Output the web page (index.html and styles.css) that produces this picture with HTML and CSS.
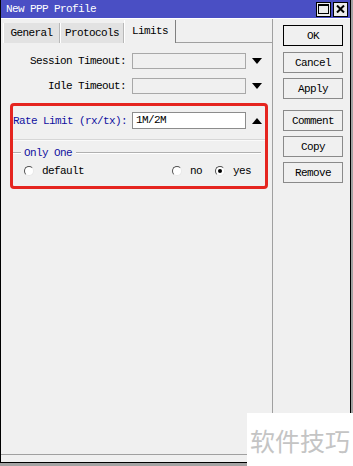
FILE: index.html
```html
<!DOCTYPE html>
<html>
<head>
<meta charset="utf-8">
<link rel="stylesheet" href="styles.css">
</head>
<body>
<div class="window">
  <div class="titlebar">
    <span class="title">New PPP Profile</span>
    <div class="tb-btns">
      <span class="tb-btn"><svg width="11" height="10" viewBox="0 0 11 10"><rect x="0.5" y="0.5" width="10" height="9" fill="none" stroke="#000"/><rect x="0" y="0" width="11" height="2" fill="#000"/></svg></span>
      <span class="tb-btn"><svg width="9" height="8" viewBox="0 0 9 8"><path d="M1 0.5 L8 7.5 M8 0.5 L1 7.5" stroke="#000" stroke-width="2"/></svg></span>
    </div>
  </div>
  <div class="main">
    <div class="left">
      <div class="tabs">
        <div class="tab t-general">General</div>
        <div class="tab t-protocols">Protocols</div>
        <div class="tab active t-limits">Limits</div>
        <div class="tab-fill"></div>
      </div>
      <div class="pane">
        <div class="row">
          <span class="label">Session Timeout:</span>
          <span class="input disabled"></span>
          <svg class="arrow" width="10" height="6" viewBox="0 0 10 6"><path d="M0 0 H10 L5 6 Z" fill="#000"/></svg>
        </div>
        <div class="row">
          <span class="label">Idle Timeout:</span>
          <span class="input disabled"></span>
          <svg class="arrow" width="10" height="6" viewBox="0 0 10 6"><path d="M0 0 H10 L5 6 Z" fill="#000"/></svg>
        </div>
        <div class="highlight">
          <div class="row rate">
            <span class="label blue">Rate Limit (rx/tx):</span>
            <span class="input">1M/2M</span>
            <svg class="arrow" width="10" height="6" viewBox="0 0 10 6"><path d="M0 6 H10 L5 0 Z" fill="#000"/></svg>
          </div>
          <div class="sep"></div>
          <div class="group-head">
            <span class="gline short"></span>
            <span class="legend">Only One</span>
            <span class="gline long"></span>
          </div>
          <div class="radios">
            <span class="radio-item"><span class="radio"></span>default</span>
            <span class="radio-item push"><span class="radio"></span>no</span>
            <span class="radio-item"><span class="radio checked"></span>yes</span>
          </div>
        </div>
      </div>
    </div>
    <div class="buttons">
      <div class="btn default">OK</div>
      <div class="btn">Cancel</div>
      <div class="btn">Apply</div>
      <div class="btn spaced">Comment</div>
      <div class="btn">Copy</div>
      <div class="btn">Remove</div>
    </div>
  </div>
  <div class="status"></div>
</div>
<div class="watermark">软件技巧</div>
</body>
</html>
```

FILE: styles.css
```css
html, body {
  margin: 0;
  padding: 0;
}
body {
  width: 353px;
  height: 466px;
  background: #a3a3a3;
  position: relative;
  overflow: hidden;
  font-family: "Liberation Mono", "DejaVu Sans Mono", monospace;
  font-size: 11px;
  letter-spacing: -0.6px;
  color: #000;
}
.window {
  width: 351px;
  height: 463px;
  box-sizing: border-box;
  border: 1px solid #000;
  border-top: none;
  background: #f0f0f0;
  display: flex;
  flex-direction: column;
}
.titlebar {
  height: 19px;
  flex: none;
  background: #4a4fc4;
  border-bottom: 1px solid #fff;
  box-sizing: border-box;
  display: flex;
  align-items: center;
  padding-left: 5px;
  padding-right: 2px;
}
.title {
  color: #fff;
  flex: 1;
}
.tb-btns {
  display: flex;
  gap: 2px;
}
.tb-btn {
  width: 15px;
  height: 15px;
  box-sizing: border-box;
  background: #ececec;
  border: 1px solid #000;
  display: flex;
  align-items: center;
  justify-content: center;
}
.main {
  flex: 1;
  display: flex;
}
.left {
  width: 272px;
  box-sizing: border-box;
  border-right: 1px solid #a0a0a0;
  display: flex;
  flex-direction: column;
}
.tabs {
  display: flex;
  height: 24px;
  padding-left: 2px;
  box-sizing: border-box;
  padding-top: 1px;
}
.tab {
  height: 20px;
  margin-top: 3px;
  box-sizing: border-box;
  background: #e2e2e2;
  border-left: 1px solid #fff;
  border-right: 1px solid #b8b8b8;
  display: flex;
  align-items: center;
  justify-content: center;
}
.t-general { width: 57px; }
.t-protocols { width: 64px; }
.t-limits { width: 52px; }
.tab.active {
  height: 23px;
  margin-top: 0;
  background: #f0f0f0;
  border-right: 1px solid #808080;
  padding-bottom: 2px;
}
.tab-fill {
  flex: 1;
  border-bottom: 1px solid #a0a0a0;
}
.pane {
  flex: 1;
  padding-top: 10px;
}
.row {
  display: grid;
  grid-template-columns: 125px 114px 10px;
  column-gap: 6px;
  align-items: center;
  height: 16px;
  margin-bottom: 9px;
}
.row .label {
  text-align: right;
  white-space: nowrap;
}
.input {
  height: 16px;
  box-sizing: border-box;
  border: 1px solid #a8a8a8;
  background: #fff;
  padding-left: 3px;
  line-height: 14px;
}
.input.disabled {
  background: #f0f0f0;
}
.arrow {
  justify-self: center;
}
.highlight {
  width: 258px;
  box-sizing: border-box;
  margin-left: 9px;
  margin-top: 1px;
  border: 3px solid #e5251f;
  border-radius: 4px;
  padding-top: 6px;
  padding-bottom: 9px;
}
.row.rate {
  grid-template-columns: 113px 114px 10px;
  height: 17px;
  margin-bottom: 0;
}
.row.rate .input {
  height: 17px;
  border-color: #8c8c8c;
}
.row.rate .label {
  text-align: left;
}
.blue {
  color: #1010a0;
}
.sep {
  margin-top: 10px;
  height: 1px;
  background: #d6d6d6;
  border-bottom: 1px solid #fafafa;
}
.group-head {
  display: flex;
  align-items: center;
  height: 12px;
  margin-top: 6px;
}
.gline {
  height: 1px;
  background: #b0b0b0;
  border-bottom: 1px solid #fff;
}
.gline.short {
  width: 8px;
}
.gline.long {
  width: 185px;
}
.legend {
  color: #1010a0;
  padding: 0 4px 0 3px;
}
.radios {
  display: flex;
  align-items: center;
  height: 12px;
  margin-top: 6px;
  padding-left: 11px;
  padding-right: 14px;
}
.radio-item {
  display: flex;
  align-items: center;
  gap: 8px;
}
.radio-item.push {
  margin-left: auto;
  margin-right: 13px;
}
.radio {
  width: 10px;
  height: 10px;
  box-sizing: border-box;
  border-radius: 50%;
  background: #fff;
  border: 1px solid;
  border-color: #505050 #e8e8e8 #e8e8e8 #505050;
  display: flex;
  align-items: center;
  justify-content: center;
}
.radio.checked::after {
  content: "";
  width: 4px;
  height: 4px;
  border-radius: 50%;
  background: #000;
}
.buttons {
  flex: 1;
  padding: 6px 0 0 10px;
  display: flex;
  flex-direction: column;
  gap: 5px;
}
.btn {
  width: 60px;
  height: 21px;
  box-sizing: border-box;
  border: 1px solid #8a8a8a;
  background: #f0f0f0;
  display: flex;
  align-items: center;
  justify-content: center;
}
.btn.default {
  border: 1px solid #000;
  margin-bottom: 1px;
}
.btn.spaced {
  margin-top: 6px;
}
.status {
  height: 7px;
  flex: none;
  border-top: 1px solid #a0a0a0;
}
.watermark {
  position: absolute;
  left: 247px;
  top: 413px;
  width: 106px;
  height: 53px;
  background: #fff;
  color: #c4c4c4;
  font-family: "Noto Sans CJK SC", sans-serif;
  font-size: 25px;
  letter-spacing: 0;
  display: flex;
  align-items: center;
  padding-left: 3px;
  box-sizing: border-box;
}
```
